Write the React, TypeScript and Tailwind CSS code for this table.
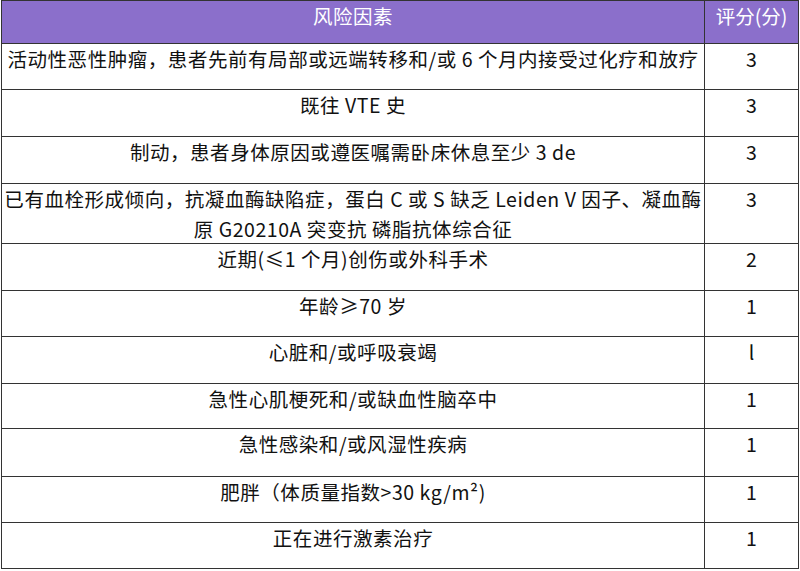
import React from "react";

const rows: { h: string; text: React.ReactNode; score: string }[] = [
  { h: "h-[46px]", text: "活动性恶性肿瘤，患者先前有局部或远端转移和/或 6 个月内接受过化疗和放疗", score: "3" },
  { h: "h-[47px]", text: "既往 VTE 史", score: "3" },
  { h: "h-[47px]", text: "制动，患者身体原因或遵医嘱需卧床休息至少 3 de", score: "3" },
  {
    h: "h-[60px]",
    text: (
      <>
        已有血栓形成倾向，抗凝血酶缺陷症，蛋白 C 或 S 缺乏 Leiden V 因子、凝血酶
        <br />
        原 G20210A 突变抗 磷脂抗体综合征
      </>
    ),
    score: "3",
  },
  { h: "h-[47px]", text: "近期(≤1 个月)创伤或外科手术", score: "2" },
  { h: "h-[46px]", text: "年龄≥70 岁", score: "1" },
  { h: "h-[47px]", text: "心脏和/或呼吸衰竭", score: "l" },
  { h: "h-[45px]", text: "急性心肌梗死和/或缺血性脑卒中", score: "1" },
  { h: "h-[48px]", text: "急性感染和/或风湿性疾病", score: "1" },
  { h: "h-[46px]", text: "肥胖（体质量指数>30 kg/m²)", score: "1" },
  { h: "h-[45px]", text: "正在进行激素治疗", score: "1" },
];

export default function App() {
  return (
    <div
      className="w-[800px] h-[571px] bg-white pl-px"
      style={{ fontFamily: '"Noto Sans CJK SC", "Noto Sans", sans-serif' }}
    >
      <div className="w-[798px] border border-[#333] text-[19.5px] text-[#111]">
        <div className="flex h-[43px] bg-[#8b6fcb] text-white border-b border-[#333]">
          <div className="w-[703px] border-r border-[#333] flex justify-center pt-0 leading-[29px] tracking-[0.5px]">
            风险因素
          </div>
          <div className="flex-1 flex justify-center pt-0 leading-[29px]">评分(分)</div>
        </div>
        {rows.map((r, i) => (
          <div
            key={i}
            className={`flex ${r.h} ${i < rows.length - 1 ? "border-b border-[#333]" : ""}`}
          >
            <div className="w-[703px] border-r border-[#333] text-center whitespace-nowrap pt-0 leading-[29.5px] tracking-[0.55px]">
              {r.text}
            </div>
            <div className="flex-1 text-center pt-0 leading-[29.5px]">{r.score}</div>
          </div>
        ))}
      </div>
    </div>
  );
}
